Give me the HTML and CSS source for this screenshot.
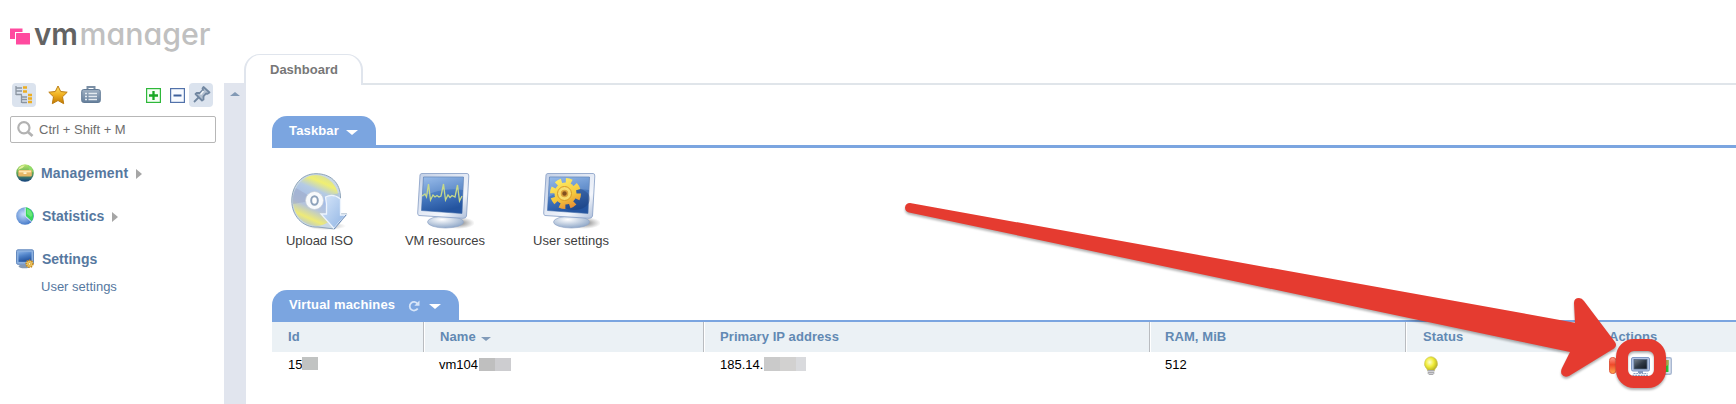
FILE: index.html
```html
<!DOCTYPE html>
<html lang="en">
<head>
<meta charset="utf-8">
<title>VMmanager</title>
<link rel="stylesheet" href="styles.css">
</head>
<body>
<svg class="defs" width="0" height="0" aria-hidden="true">
  <defs>
    <linearGradient id="gold" x1="0" y1="0" x2="0" y2="1"><stop offset="0" stop-color="#ffe36a"/><stop offset=".5" stop-color="#f0b020"/><stop offset="1" stop-color="#c07800"/></linearGradient>
    <linearGradient id="slate" x1="0" y1="0" x2="0" y2="1"><stop offset="0" stop-color="#9fb0c2"/><stop offset="1" stop-color="#647e9b"/></linearGradient>
    <linearGradient id="screen" x1="0" y1="0" x2=".3" y2="1"><stop offset="0" stop-color="#86b0e6"/><stop offset=".45" stop-color="#4f82c8"/><stop offset="1" stop-color="#24549f"/></linearGradient>
    <linearGradient id="bezel" x1="0" y1="0" x2="1" y2="1"><stop offset="0" stop-color="#c3d0e6"/><stop offset=".7" stop-color="#f3f6fc"/><stop offset="1" stop-color="#a9bbd8"/></linearGradient>
    <radialGradient id="base" cx=".4" cy=".3" r=".7"><stop offset="0" stop-color="#fff"/><stop offset="1" stop-color="#91a9c9"/></radialGradient>
    <radialGradient id="shade"><stop offset="0" stop-color="#222" stop-opacity=".65"/><stop offset="1" stop-color="#555" stop-opacity="0"/></radialGradient>
    <linearGradient id="disc" x1=".7" y1="0" x2=".3" y2="1"><stop offset="0" stop-color="#d6dfa0"/><stop offset=".15" stop-color="#f0ef72"/><stop offset=".32" stop-color="#b5cbe4"/><stop offset=".5" stop-color="#a9bfe4"/><stop offset=".65" stop-color="#b5c4dc"/><stop offset=".85" stop-color="#eeea77"/><stop offset="1" stop-color="#b4c6d9"/></linearGradient>
    <linearGradient id="down" x1="0" y1="0" x2="1" y2="1"><stop offset="0" stop-color="#d8e7fa"/><stop offset="1" stop-color="#8eb3e3"/></linearGradient>
    <radialGradient id="bulb" cx=".4" cy=".4" r=".6"><stop offset="0" stop-color="#ffffd0"/><stop offset=".55" stop-color="#f0ec38"/><stop offset="1" stop-color="#bdb528"/></radialGradient>
    <linearGradient id="gear" gradientUnits="userSpaceOnUse" x1="15" y1="5" x2="28" y2="36"><stop offset="0" stop-color="#fff06a"/><stop offset=".6" stop-color="#f5c83c"/><stop offset="1" stop-color="#e58a35"/></linearGradient>
    <linearGradient id="globe" x1="0" y1="0" x2="0" y2="1"><stop offset="0" stop-color="#b9e670"/><stop offset=".45" stop-color="#6bb054"/><stop offset="1" stop-color="#12407e"/></linearGradient>
    <radialGradient id="pie" cx=".4" cy=".4" r=".6"><stop offset="0" stop-color="#c6dcfb"/><stop offset="1" stop-color="#4a7ecb"/></radialGradient>
    <linearGradient id="hot" x1="0" y1="0" x2="0" y2="1"><stop offset="0" stop-color="#ff9a8a"/><stop offset=".45" stop-color="#f0482a"/><stop offset="1" stop-color="#ffad4c"/></linearGradient>
    <linearGradient id="dark" x1="0" y1="0" x2="1" y2="1"><stop offset="0" stop-color="#77818d"/><stop offset=".5" stop-color="#303a46"/><stop offset="1" stop-color="#10161f"/></linearGradient>
    <g id="monitor">
      <ellipse cx="41" cy="50" rx="17" ry="6" fill="url(#shade)"/>
      <path d="M23 41 L37 43 L38 48 H22Z" fill="#8ba2c6"/>
      <ellipse cx="28.500" cy="49" rx="18" ry="6" fill="url(#base)" stroke="#93a8c8" stroke-width=".7"/>
      <path d="M5 0.500 H50 Q52 0.500 51.800 3 L49.500 43 Q49 45.500 46 45.300 L2 42.500 Q.5 42 .7 40 L3 2 Q3.200.5 5 .5Z" fill="url(#bezel)" stroke="#8fa5c9" stroke-width=".9"/>
      <path d="M6.500 4 H46.500 L45 40.500 L4.500 37.500Z" fill="url(#screen)" stroke="#416ca8" stroke-width=".6"/>
      <path d="M6.500 4 H46.500 L46 17 Q24 14 5.500 24Z" fill="#fff" opacity=".16"/>
    </g>
  </defs>
</svg>

<div class="app">
  <aside class="sidebar">
    <svg class="logo" width="206" height="38" viewBox="0 0 206 38">
      <rect x="0" y="10.500" width="12.500" height="10.500" fill="#ff4a9f"/>
      <rect x="5" y="14" width="16" height="12" fill="#fff"/>
      <rect x="6" y="15" width="14" height="11.500" rx=".5" fill="#ff4a9f"/>
      <text class="logo-vm" x="24" y="26.500" textLength="44" lengthAdjust="spacingAndGlyphs">vm</text>
      <text class="logo-name" x="69.500" y="26.500" textLength="131" lengthAdjust="spacingAndGlyphs">manager</text>
    </svg>

    <div class="tools">
      <span class="tool active"><svg width="24" height="24" viewBox="0 0 24 24" fill="none">
        <path d="M4 3V12M4 5H10M4 8H10M4 11.500H10M9.500 12V20M10 14H15M10 16.500H15M10 19.500H15" stroke="#8b95a1" stroke-width="1.300"/>
        <path d="M11 4.500H15M11 8.500H15M16 12H20M16 15.500H20M16 19H20" stroke="#edae22" stroke-width="2.400"/></svg></span>
      <span class="tool star"><svg width="20" height="20" viewBox="0 0 20 20"><path d="M10 1 L12.700 6.500 L19.200 7.200 L14.500 11.800 L15.700 18.700 L10 15.500 L4.300 18.700 L5.500 11.800 L.8 7.200 L7.300 6.500Z" fill="url(#gold)" stroke="#bd7d12" stroke-width="1" stroke-linejoin="round"/></svg></span>
      <span class="tool case"><svg width="20" height="20" viewBox="0 0 20 20"><path d="M6.500 5V2H13.500V5" fill="none" stroke="#7b8fa5" stroke-width="2"/><rect x=".7" y="4.500" width="18.600" height="13" rx="2" fill="url(#slate)" stroke="#627b96"/><path d="M4 8.500H6M7.500 8.500H16M4 11.500H6M7.500 11.500H16M4 14.500H6M7.500 14.500H16" stroke="#e3eaf0" stroke-width="1.300"/></svg></span>
      <span class="tool plus"><svg width="15" height="15" viewBox="0 0 15 15"><rect x=".6" y=".6" width="13.800" height="13.800" fill="#f6fff6" stroke="#2eb83a" stroke-width="1.200"/><path d="M7.500 3V12M3 7.500H12" stroke="#18a824" stroke-width="2.300"/></svg></span>
      <span class="tool minus"><svg width="15" height="15" viewBox="0 0 15 15"><rect x=".6" y=".6" width="13.800" height="13.800" fill="#f7faff" stroke="#5272aa" stroke-width="1.200"/><path d="M3.500 7.500H11.500" stroke="#3d609c" stroke-width="2"/></svg></span>
      <span class="tool active pin"><svg width="24" height="24" viewBox="0 0 24 24"><path d="M14.500 4 L20.500 9.500 L18.500 10.800 L17 10.500 L14.500 13.300 V16.500 L13 17.500 L6.500 11 L8 9.800 L11 10 L14 7 L13.500 5.500Z" fill="#b4c1d1" stroke="#7187a1" stroke-width="1.800" stroke-linejoin="round"/><path d="M9.500 14.500L5 19" stroke="#7187a1" stroke-width="1.800"/><path d="M14.500 8L11.500 11.500" stroke="#f4f7fa" stroke-width="1.500"/></svg></span>
    </div>

    <div class="search">
      <svg width="17" height="17" viewBox="0 0 17 17" fill="none" stroke="#b2b2b2"><circle cx="6.900" cy="6.700" r="5.600" stroke-width="2.200"/><path d="M11 11L15.500 15" stroke-width="2.800"/></svg>
      <span>Ctrl + Shift + M</span>
    </div>

    <nav class="menu">
      <div class="menu-item">
        <svg class="menu-icon" width="18" height="18" viewBox="0 0 18 18"><circle cx="9" cy="9" r="8.800" fill="url(#globe)"/><path d="M2 6Q4 1 9 1.500Q7 4 4 5Z" fill="#e4f29c"/><path d="M12 1L16 4L17 8L13 6Z" fill="#8fdc69"/><rect x="2.300" y="6" width="13.500" height="6.500" rx="1.200" fill="#e6b766"/><path d="M3 7.500H15" stroke="#ffe5ac" stroke-width="1.800"/><rect x="7.500" y="8.300" width="3" height="1.700" fill="#fff5d2"/></svg>
        <b>Management</b><i class="more"></i>
      </div>
      <div class="menu-item shifted">
        <svg class="menu-icon" width="18" height="18" viewBox="0 0 18 18"><circle cx="9" cy="9" r="8.800" fill="url(#pie)"/><path d="M9.500 9V.3A8.800 8.800 0 0 1 15.800 14Z" fill="#3ad95a"/><path d="M11 7V1.700Q16 3.500 16.300 8L15 10Z" fill="#8cf090" opacity=".6"/><path d="M9.200.5V9L15.700 15" fill="none" stroke="#e2edfb" stroke-width="1"/></svg>
        <b>Statistics</b><i class="more"></i>
      </div>
      <div class="menu-item shifted">
        <svg class="menu-icon" width="18" height="20" viewBox="0 0 18 20"><rect x=".5" y=".8" width="17" height="14.500" rx="1.500" fill="#8db1df" stroke="#6389be"/><rect x="2.500" y="2.800" width="13" height="10" fill="url(#screen)"/><ellipse cx="8.500" cy="17.300" rx="6" ry="1.900" fill="#8499b4"/><circle cx="13.500" cy="14.800" r="3.400" fill="#f2c95b" stroke="#c58b28" stroke-width="1.600" stroke-dasharray="1.500 1"/><circle cx="13.500" cy="14.800" r="1.300" fill="#fff2ba" stroke="#bc852c" stroke-width=".6"/></svg>
        <b>Settings</b>
      </div>
      <a class="submenu">User settings</a>
    </nav>
  </aside>

  <div class="rail"><i class="rail-up"></i></div>

  <main class="main">
    <div class="tabs"><div class="tab">Dashboard</div><div class="tabs-line"></div></div>

    <section class="panel">
      <div class="panel-head"><h2 class="panel-tab taskbar-tab">Taskbar<i class="caret"></i></h2></div>
      <div class="shortcuts">
        <div class="shortcut">
          <svg width="57" height="57" viewBox="0 0 57 57">
            <ellipse cx="35" cy="53" rx="20" ry="4" fill="url(#shade)" opacity=".7"/>
            <path d="M25 .7C39 .7 49.500 9 49.500 25V41H56L43.500 56L27 54C11 55 .8 42 .8 28C.8 12 11 .7 25 .7Z" fill="#c9d8e4" stroke="#8fa5ba"/>
            <ellipse cx="25" cy="27.500" rx="23" ry="25.500" fill="url(#disc)"/>
            <path d="M25 27L5 15A24 24 0 0 0 2 31Z" fill="#9fa9c7" opacity=".55"/>
            <path d="M25 27L48 20A23 23 0 0 1 46 38Z" fill="#9fb9eb" opacity=".55"/>
            <circle cx="23.500" cy="27.500" r="9" fill="#f8fafc" stroke="#c5cdd6" stroke-width=".7"/>
            <ellipse cx="23.500" cy="27.500" rx="3.300" ry="4.300" fill="#fff" stroke="#8fa3bb" stroke-width="2"/>
            <path d="M34.500 24Q42 20 49.500 26V42H55L43 55.500L30 41H35.500V31Z" fill="url(#down)" stroke="#edf4fd" stroke-width="1.300"/>
            <path d="M55 42L43 56" stroke="#6688b8" stroke-width="1"/>
          </svg>
          <span>Upload ISO</span>
        </div>
        <div class="shortcut">
          <svg width="57" height="57" viewBox="0 0 57 57"><use href="#monitor"/>
            <path d="M5 23L8 21L9.500 24L11.500 11L13.500 27L16 22L18 24L20 22.500L22 24L24 23L26.500 11L28.500 27L31 22L33 24.500L35 22.500L38 24L40.500 12L42.500 28L45 23" fill="none" stroke="#c6d98a" stroke-width="1.300"/></svg>
          <span>VM resources</span>
        </div>
        <div class="shortcut">
          <svg width="57" height="57" viewBox="0 0 57 57"><use href="#monitor"/>
            <ellipse cx="31" cy="26" rx="16" ry="11" fill="#152f65" opacity=".3"/>
            <circle cx="22.500" cy="20.500" r="12.500" fill="none" stroke="url(#gear)" stroke-width="6" stroke-dasharray="5.600 4.218"/>
            <circle cx="22.500" cy="20.500" r="11" fill="url(#gear)"/>
            <circle cx="21.500" cy="20.500" r="7" fill="#f8de70" stroke="#d99a28" stroke-width="1"/>
            <circle cx="21.500" cy="20.500" r="3" fill="#82501f" stroke="#dca43d" stroke-width="1.500"/></svg>
          <span>User settings</span>
        </div>
      </div>
    </section>

    <section class="panel">
      <div class="panel-head"><h2 class="panel-tab vm-tab">Virtual machines
        <svg class="refresh" width="12" height="12" viewBox="0 0 12 12"><path d="M9.500 3.700A4.300 4.300 0 1 0 9.700 8.500" fill="none" stroke="#d7e5f8" stroke-width="1.800"/><path d="M11.500.5V5.700H6.300Z" fill="#d7e5f8"/></svg><i class="caret"></i></h2></div>
      <div class="grid head">
        <div>Id</div><div>Name<i class="sort"></i></div><div>Primary IP address</div><div>RAM, MiB</div><div>Status</div><div>Actions</div>
      </div>
      <div class="grid row">
        <div>15<i class="mask m-id"></i></div>
        <div>vm104<i class="mask m-name"></i></div>
        <div class="ip">185.14.<i class="mask m-ip"></i></div>
        <div>512</div>
        <div class="icons"><svg width="16" height="20" viewBox="0 0 16 20"><path d="M8 .7A7 7 0 0 1 12 13L11.500 14.500H4.500L4 13A7 7 0 0 1 8 .7Z" fill="url(#bulb)" stroke="#c5bf55" stroke-width=".6"/><path d="M4.700 14H11.300V17.500L9.800 19H6.200L4.700 17.500Z" fill="#a9a9ad"/><path d="M5 15.500H11M5.500 17.500H10.500" stroke="#dadade" stroke-width=".8"/></svg></div>
        <div class="icons actions">
          <svg width="18" height="18" viewBox="0 0 18 18"><rect x=".5" y=".5" width="6.500" height="16" rx="3" fill="url(#hot)" stroke="#e05a40"/></svg>
          <svg width="19" height="19" viewBox="0 0 19 19"><rect x=".5" y=".5" width="18" height="13.500" rx="1.500" fill="#b3c4e3" stroke="#7f98c5"/><rect x="3" y="2.500" width="13" height="9.500" fill="url(#dark)" stroke="#526785" stroke-width=".8"/><path d="M7 14H12V16H7Z" fill="#8499bf"/><path d="M2.500 16.500H16.500M1.500 18.400H17.500" stroke="#8a9fc2" stroke-width="1.100" stroke-dasharray="2 .7"/></svg>
          <svg width="18" height="18" viewBox="0 0 18 18"><rect x=".7" y=".7" width="16.600" height="16.600" rx="1.500" fill="#dfe6f2" stroke="#a9b8d1" stroke-width="1.400"/><path d="M10 3H14.500V15H10Z" fill="#2fc235"/><path d="M10 3H14.500V8L10 10Z" fill="#b5a64e"/></svg>
        </div>
      </div>
    </section>
  </main>
</div>

<svg class="annotation" width="1736" height="404" viewBox="0 0 1736 404">
  <path class="pointer" d="M910 203 L1575 322.700 L1574 303 Q1574 298 1579 298 Q1582 298 1584 301 L1615 342 Q1617.500 346 1614 348.500 L1569 376 Q1564 378 1561.500 374 Q1560.500 371 1562 368 L1570 352 L1520 341.500 L909 212.500 Q905 211.500 905 207.500 Q905.500 203 910 203Z"/>
  <rect class="ring" x="1622" y="345" width="38" height="37" rx="12"/>
</svg>
</body>
</html>
```
FILE: styles.css
```css
* { box-sizing: border-box; }
body { margin: 0; background: #fff; font: 13px/16px "Liberation Sans", Arial, sans-serif; color: #000; overflow: hidden; }
svg { display: block; flex: none; }
.defs { position: absolute; }
.app { display: flex; height: 404px; }

.sidebar { width: 224px; flex: none; padding: 18px 8px 0 10px; }
.logo { overflow: visible; }
.logo-vm { font: 600 31px Inter, sans-serif; fill: #636363; }
.logo-name { font: 500 31px Inter, sans-serif; font-feature-settings: "cv11"; fill: #c0c0c0; }
.tools { display: flex; align-items: center; height: 24px; margin: 27px 0 0 2px; }
.tool.active { width: 24px; height: 24px; border-radius: 4px; background: #dbe3ee; }
.star { margin-left: 11.5px; }
.case { margin-left: 13px; }
.plus { margin-left: 45.5px; }
.minus { margin-left: 9px; }
.pin { margin-left: 4px; }
.search { display: flex; align-items: center; gap: 5px; width: 206px; height: 27px; margin-top: 9px; padding-left: 6px; border: 1px solid #b7b7b7; border-radius: 2px; color: #6d6d6d; }
.search svg { margin-bottom: 1px; }
.menu { padding: 19px 0 0 6px; color: #56789f; }
.menu-item { display: flex; align-items: center; height: 22px; margin-bottom: 21px; font-size: 14px; }
.menu-item b { letter-spacing: .18px; }
.shifted b { letter-spacing: 0; }
.menu-icon { margin-right: 7px; }
.shifted .menu-icon { margin-right: 8px; }
.more { margin: 2px 0 0 8px; border-left: 6px solid #a6a6a6; border-top: 5px solid transparent; border-bottom: 5px solid transparent; }
.submenu { display: block; margin: -12px 0 0 25px; }

.rail { width: 22px; flex: none; margin-top: 83px; padding: 9px 0 0 6px; background: #e1e5ee; }
.rail-up { display: block; width: 10px; border: 5px solid transparent; border-top: 0; border-bottom: 4px solid #8299b5; }

.main { flex: 1; min-width: 0; margin-left: -2px; padding-top: 54px; }
.tabs { display: flex; align-items: flex-end; height: 31px; }
.tab { width: 119px; height: 31px; padding: 7px 0 0 24px; border: 2px solid #e0e5ed; border-top-width: 1px; border-bottom: 0; border-radius: 16px 16px 0 0; background: #fff; color: #777; font-weight: 700; }
.tabs-line { flex: 1; height: 2px; background: #e0e5ea; }

.panel { margin-left: 28px; }
.panel-head { display: flex; align-items: flex-start; height: 32px; margin-top: 31px; border-bottom: 3px solid #7ba5e0; }
.panel-tab { display: flex; align-items: center; height: 32px; margin: 0; padding: 0 0 2px 17px; border-radius: 15px 15px 0 0; background: #7ba5e0; color: #fff; font-size: 13px; line-height: 16px; letter-spacing: .15px; }
.taskbar-tab { width: 104px; }
.vm-tab { width: 187px; }
.refresh { margin: 1px 0 0 13px; }
.caret { margin: 2px 0 0 7px; border: 6px solid transparent; border-top: 5px solid #fff; border-bottom: 0; }
.refresh + .caret { margin-left: 9px; }
.shortcuts { display: flex; height: 111px; padding-top: 25px; }
.shortcut { display: flex; flex-direction: column; align-items: center; gap: 3px; width: 126px; color: #404040; }
.shortcut:first-child { width: 95px; margin-right: 15px; }

.panel + .panel .panel-head { border-bottom-width: 2px; }
.grid { display: grid; grid-template-columns: 152px 280px 446px 256px 186px 1fr; }
.grid > div { display: flex; align-items: center; padding-left: 15px; }
.grid > div:first-child { padding-left: 16px; }
.head { height: 30px; background: #ebf1f5; color: #6289b3; font-weight: 700; letter-spacing: .08px; }
.head > div:nth-child(-n+5) { border-right: 1px solid #b9bcc0; }
.head > div + div { border-left: 1px solid #fff; padding-left: 15px; }
.head > div:nth-child(4) { padding-left: 14px; }
.head > div:nth-child(5) { padding-left: 16px; border-right: 0; }
.head > div:last-child { border-left: 0; padding-left: 17px; }
.sort { margin: 3px 0 0 5px; border: 5px solid transparent; border-top: 4px solid #819bb9; border-bottom: 0; }
.row { height: 25px; }
.row > .ip { padding-left: 16px; }
.mask { height: 13px; }
.m-id { width: 16px; margin-bottom: 3px; background: #c1c3c2; }
.m-name { width: 32px; margin-left: 1px; background: linear-gradient(90deg, #bfbfbf 50%, #cdcdd0 50%); }
.m-ip { width: 42px; height: 14px; margin: 0 0 2px 1px; background: linear-gradient(90deg, #cacaca 38%, #d2d1d0 38% 76%, #d9dadd 76%); }
.grid > .icons { padding: 3px 0 0 17px; }
.grid > .actions { gap: 4px; }

.annotation { position: absolute; inset: 0; filter: drop-shadow(0 2px 1px rgba(0, 0, 0, .3)); }
.pointer { fill: #e53b30; }
.ring { fill: none; stroke: #e53b30; stroke-width: 12px; }
```
